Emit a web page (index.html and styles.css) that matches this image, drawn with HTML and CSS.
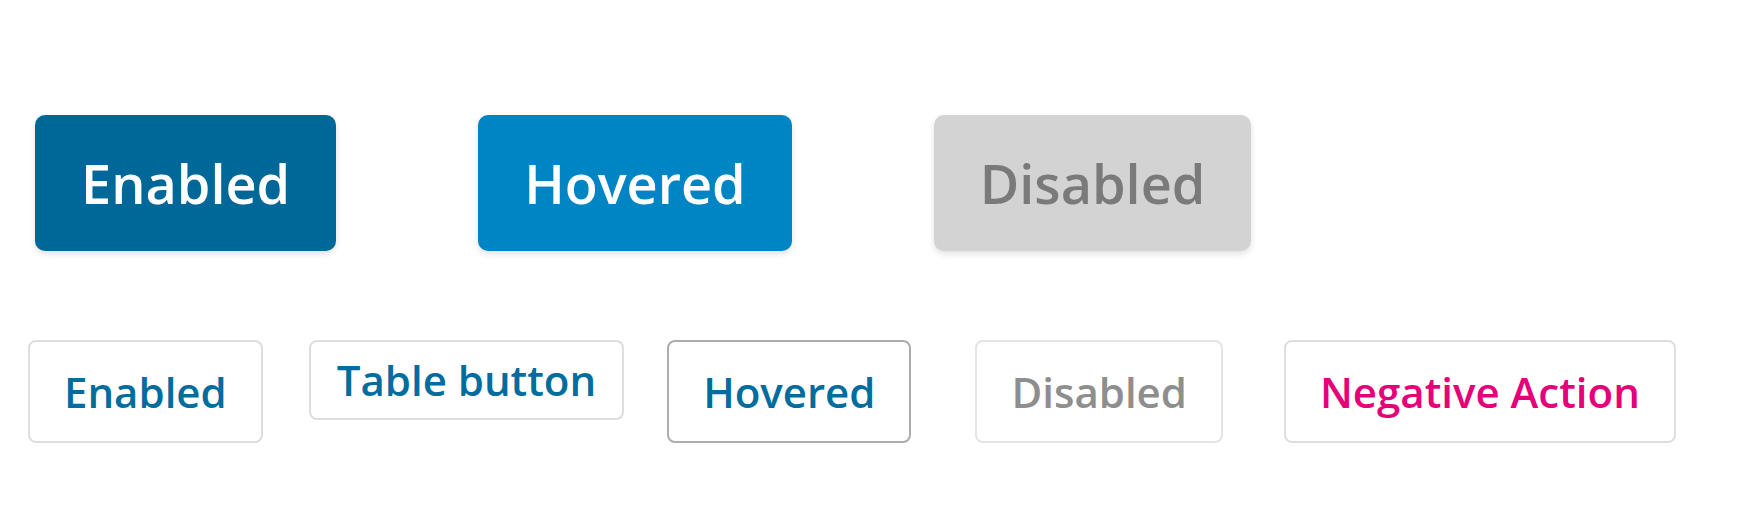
FILE: index.html
```html
<!DOCTYPE html>
<html lang="en">
<head>
<meta charset="utf-8">
<title>Buttons</title>
<link rel="stylesheet" href="styles.css">
</head>
<body>
<main class="page">
  <div class="row row-primary">
    <button class="btn-primary">Enabled</button>
    <button class="btn-primary is-hovered">Hovered</button>
    <button class="btn-primary is-disabled" disabled>Disabled</button>
  </div>
  <div class="row row-secondary">
    <button class="btn-secondary">Enabled</button>
    <button class="btn-secondary btn-table gap-a">Table button</button>
    <button class="btn-secondary is-hovered gap-b">Hovered</button>
    <button class="btn-secondary is-disabled gap-c" disabled>Disabled</button>
    <button class="btn-secondary is-negative gap-d">Negative Action</button>
  </div>
</main>
</body>
</html>
```
FILE: styles.css
```css
html, body {
  margin: 0;
  padding: 0;
  background: #ffffff;
}

body {
  font-family: "Open Sans", "Noto Sans", "Liberation Sans", sans-serif;
}

.page {
  padding-top: 115px;
}

.row {
  display: flex;
  align-items: flex-start;
}

.row-primary {
  padding-left: 35px;
  gap: 142px;
}

.row-secondary {
  padding-left: 28px;
  margin-top: 89px;
}

button {
  font-family: inherit;
  font-weight: 600;
  cursor: pointer;
  margin: 0;
}

/* Primary buttons */
.btn-primary {
  font-size: 54px;
  line-height: 74px;
  padding: 31px 46px;
  border: none;
  border-radius: 10px;
  background: #006899;
  color: #ffffff;
  box-shadow: 0 3px 6px rgba(0, 0, 0, 0.12);
}

.btn-primary.is-hovered {
  background: #0085c4;
}

.btn-primary.is-disabled {
  background: #d3d3d3;
  color: #7a7a7a;
}

/* Secondary buttons */
.btn-secondary {
  font-size: 42px;
  line-height: 57px;
  padding: 21px 34px;
  border: 2px solid #dedede;
  border-radius: 8px;
  background: #ffffff;
  color: #006d9e;
}

.btn-secondary.btn-table {
  padding: 9px 26px 10px;
}

.btn-secondary.is-hovered {
  border-color: #acacac;
}

.btn-secondary.is-disabled {
  color: #8e8e8e;
  border-color: #e4e4e4;
}

.btn-secondary.is-negative {
  color: #e5007a;
}

.gap-a { margin-left: 46px; }
.gap-b { margin-left: 43px; }
.gap-c { margin-left: 64px; }
.gap-d { margin-left: 61px; }
```
